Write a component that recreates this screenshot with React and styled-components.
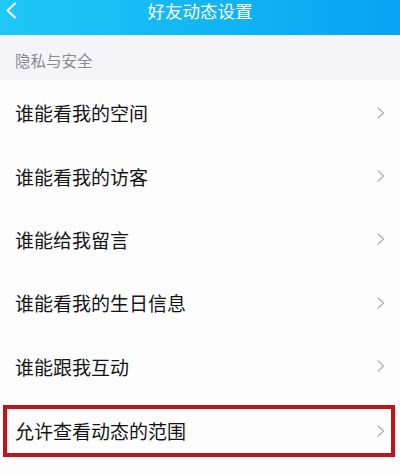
import React from "react";
import styled, { createGlobalStyle } from "styled-components";

const Global = createGlobalStyle`
  html, body { margin: 0; padding: 0; background: #fdfdfd; }
  body { font-family: "Noto Sans CJK SC", "Noto Sans", sans-serif; }
  * { box-sizing: border-box; }
`;

const Page = styled.div`
  width: 400px;
  height: 474px;
  overflow: hidden;
  background: #fdfdfd;
  display: flex;
  flex-direction: column;
`;

const Header = styled.header`
  height: 35px;
  flex: none;
  background: linear-gradient(90deg, #1fc8f6 0%, #12b6f4 50%, #08a3f3 100%);
  position: relative;
  display: flex;
  justify-content: center;
  align-items: flex-start;
  padding-top: 0;
`;

const Title = styled.h1`
  margin: 0;
  color: #fff;
  font-size: 17.5px;
  font-weight: 400;
  line-height: 22px;
`;

const Back = styled.button`
  position: absolute;
  left: 4px;
  top: 2px;
  width: 14px;
  height: 17px;
  border: 0;
  padding: 0;
  background: none;
  display: flex;
  align-items: center;
  justify-content: center;
`;

const Section = styled.div`
  height: 45px;
  flex: none;
  background: #f4f4f9;
  display: flex;
  align-items: center;
  padding: 5px 0 0 15px;
  color: #8a8a8f;
  font-size: 15.5px;
`;

const List = styled.div`
  display: flex;
  flex-direction: column;
  padding-top: 1px;
`;

const Row = styled.div`
  position: relative;
  height: 63.4px;
  display: flex;
  align-items: center;
  justify-content: space-between;
  padding: 0 15px 0 15px;
  background: #fdfdfd;
`;

const Label = styled.span`
  color: #141414;
  font-size: 19px;
  line-height: 1;
  margin-top: ${(p) => (p.$last ? "2px" : "0")};
`;

const Chevron = styled.svg`
  width: 8px;
  height: 12px;
  margin-top: ${(p) => (p.$last ? "2px" : "0")};
`;

const Highlight = styled.div`
  position: absolute;
  left: 3px;
  right: 5px;
  top: 7px;
  bottom: 4px;
  border: 4px solid #c2131b;
  pointer-events: none;
`;

const items = [
  "谁能看我的空间",
  "谁能看我的访客",
  "谁能给我留言",
  "谁能看我的生日信息",
  "谁能跟我互动",
  "允许查看动态的范围",
];

export default function App() {
  return (
    <Page>
      <Global />
      <Header>
        <Back aria-label="返回">
          <svg width="14" height="17" viewBox="0 0 14 17">
            <path d="M11 1.5 L3.5 8.5 L11 15.5" fill="none" stroke="#fff" strokeWidth="2" strokeLinecap="round" strokeLinejoin="round" />
          </svg>
        </Back>
        <Title>好友动态设置</Title>
      </Header>
      <Section>隐私与安全</Section>
      <List>
        {items.map((t, i) => {
          const last = i === items.length - 1;
          return (
            <Row key={t}>
              <Label $last={last}>{t}</Label>
              <Chevron $last={last} viewBox="0 0 8 12">
                <path d="M1.2 1 L6.5 6 L1.2 11" fill="none" stroke="#b3b3b8" strokeWidth="1.4" strokeLinecap="round" strokeLinejoin="round" />
              </Chevron>
              {last && <Highlight />}
            </Row>
          );
        })}
      </List>
    </Page>
  );
}
